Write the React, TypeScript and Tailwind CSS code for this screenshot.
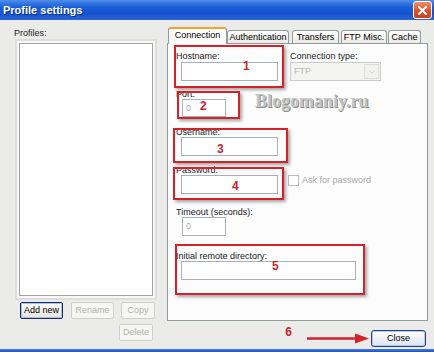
import { ChevronDown } from 'lucide-react';

function RedFrame({ className }: { className: string }) {
  return (
    <div
      className={`absolute pointer-events-none border-2 border-[#d3222a] shadow-[2px_2px_3px_rgba(0,0,0,0.35)] ${className}`}
    />
  );
}

function Num({ children, className }: { children: string; className: string }) {
  return (
    <span className={`absolute text-[12px] font-bold leading-none text-[#c8262c] ${className}`}>{children}</span>
  );
}

function Label({ children, className = '' }: { children: string; className?: string }) {
  return <div className={`h-[9px] leading-[9px] text-[#1b1b1b] whitespace-nowrap ${className}`}>{children}</div>;
}

export default function App() {
  return (
    <div className="w-[434px] h-[352px] flex flex-col overflow-hidden bg-[#ebebe9] font-['Liberation_Sans',Arial,sans-serif] text-[9px] text-black">
      {/* Title bar */}
      <div className="h-[20px] shrink-0 flex items-center justify-between pl-[3px] pr-[2px] bg-[linear-gradient(to_bottom,#4d8de9_0%,#1d5fd8_35%,#1652cf_70%,#2a66d6_100%)]">
        <span className="text-[11px] font-bold text-white leading-[20px] [text-shadow:1px_1px_0_#0a2f86]">
          Profile settings
        </span>
        <div className="w-[19px] h-[18px] rounded-[3px] border border-white bg-[linear-gradient(to_bottom,#f0906a,#d9532c_55%,#c9421c)] flex items-center justify-center">
          <svg width="11" height="11" viewBox="0 0 11 11">
            <path d="M2 2L9 9M9 2L2 9" stroke="white" strokeWidth="2" strokeLinecap="round" />
          </svg>
        </div>
      </div>

      {/* Body */}
      <div className="flex-1 flex">
        {/* Profiles list */}
        <div className="w-[167px] shrink-0 pl-[14px] pt-[9px] flex flex-col">
          <Label>Profiles:</Label>
          <div className="ml-[5px] mt-[5px] w-[134px] h-[253px] bg-white border border-[#a3a3a3] shadow-[0_0_0_2px_#f8f8f8,0_0_0_4px_#dddddd]" />
          <div className="flex ml-[6px] mt-[6px]">
            <button className="w-[43px] h-[17px] rounded-[2px] border border-[#1c2a5c] bg-[linear-gradient(to_bottom,#ffffff,#e4e4dc)] shadow-[inset_0_0_0_1px_#a9c0ec] leading-none text-black">
              Add new
            </button>
            <button className="ml-[8px] w-[43px] h-[17px] rounded-[2px] border border-[#cfcfc8] bg-[#f6f6f3] leading-none text-[#b3b3ab]">
              Rename
            </button>
            <button className="ml-[7px] w-[34px] h-[17px] rounded-[2px] border border-[#cfcfc8] bg-[#f6f6f3] leading-none text-[#b3b3ab]">
              Copy
            </button>
          </div>
          <button className="ml-[105px] mt-[5px] w-[34px] h-[17px] rounded-[2px] border border-[#cfcfc8] bg-[#f6f6f3] leading-none text-[#b3b3ab]">
            Delete
          </button>
        </div>

        {/* Tabs + panel */}
        <div className="flex-1 pr-[6px] pt-[7px] flex flex-col">
          <div className="relative z-10 flex items-end h-[17px] -mb-[1px]">
            <div className="ml-[1px] w-[59px] h-[17px] rounded-t-[3px] border-x border-t-2 border-x-[#919b9c] border-t-[#f2a535] bg-[#fcfcfc] pt-[2px] text-center leading-[9px]">
              Connection
            </div>
            <div className="mb-[1px] w-[62px] h-[13px] rounded-t-[3px] border-x border-t border-[#919b9c] bg-[linear-gradient(to_bottom,#ffffff,#ecebe6)] flex items-center justify-center leading-[9px]">
              Authentication
            </div>
            <div className="mb-[1px] ml-[3px] w-[47px] h-[13px] rounded-t-[3px] border-x border-t border-[#919b9c] bg-[linear-gradient(to_bottom,#ffffff,#ecebe6)] flex items-center justify-center leading-[9px]">
              Transfers
            </div>
            <div className="mb-[1px] ml-[2px] w-[46px] h-[13px] rounded-t-[3px] border-x border-t border-[#919b9c] bg-[linear-gradient(to_bottom,#ffffff,#ecebe6)] flex items-center justify-center leading-[9px]">
              FTP Misc.
            </div>
            <div className="mb-[1px] ml-[1px] w-[33px] h-[13px] rounded-t-[3px] border-x border-t border-[#919b9c] bg-[linear-gradient(to_bottom,#ffffff,#ecebe6)] flex items-center justify-center leading-[9px]">
              Cache
            </div>
          </div>

          <div className="relative h-[278px] border border-[#919b9c] bg-[#fcfcfc] pl-[8px] pt-[8px] flex flex-col">
            {/* Hostname / connection type */}
            <div className="flex items-start">
              <div className="relative">
                <Label>Hostname:</Label>
                <div className="ml-[5px] mt-[1px] w-[97px] h-[19px] bg-white border border-[#a7b0bb]" />
                <RedFrame className="-left-[2px] -top-[7px] w-[110px] h-[43px]" />
                <Num className="left-[67px] top-[8px]">1</Num>
              </div>
              <div className="ml-[12px]">
                <Label>Connection type:</Label>
                <div className="mt-[1px] w-[91px] h-[19px] bg-[#f4f4f2] border border-[#c9c9c6] flex items-center justify-between pl-[3px] pr-[1px]">
                  <span className="text-[#b8b8b8] leading-none">FTP</span>
                  <span className="w-[15px] h-[15px] border border-[#dcdcdc] bg-[#f1f1ef] flex items-center justify-center">
                    <ChevronDown size={10} strokeWidth={2} className="text-[#c2c2c2]" />
                  </span>
                </div>
              </div>
            </div>

            {/* Port */}
            <div className="flex items-start mt-[9px]">
              <div className="relative">
                <Label>Port:</Label>
                <div className="ml-[6px] w-[44px] h-[18px] bg-white border border-[#a7b0bb] pl-[3px] flex items-center text-[#a8a8a8] leading-none">
                  0
                </div>
                <RedFrame className="left-[1px] top-[1px] w-[63px] h-[28px]" />
                <Num className="left-[24px] top-[10px]">2</Num>
              </div>
              <span className="ml-[29px] mt-[2px] font-['Liberation_Serif',serif] text-[18px] font-bold leading-none text-[#c4c4c4] [text-shadow:1px_1px_0_#8e8e8e,-1px_-1px_0_#ffffff]">
                Blogomaniy.ru
              </span>
            </div>

            {/* Username */}
            <div className="relative mt-[11px] self-start">
              <Label>Username:</Label>
              <div className="ml-[5px] w-[97px] h-[19px] bg-white border border-[#a7b0bb]" />
              <RedFrame className="-left-[3px] top-0 w-[115px] h-[35px]" />
              <Num className="left-[41px] top-[15px]">3</Num>
            </div>

            {/* Password */}
            <div className="relative mt-[10px] self-start">
              <Label>Password:</Label>
              <div className="flex items-start">
                <div className="ml-[5px] w-[97px] h-[19px] bg-white border border-[#a7b0bb]" />
                <div className="ml-[10px] w-[11px] h-[11px] bg-white border border-[#bdbdbd]" />
                <span className="ml-[3px] leading-[11px] text-[#a6a6a6] whitespace-nowrap">Ask for password</span>
              </div>
              <RedFrame className="-left-[3px] top-[1px] w-[111px] h-[33px]" />
              <Num className="left-[56px] top-[14px]">4</Num>
            </div>

            {/* Timeout */}
            <div className="mt-[14px] self-start">
              <Label>Timeout (seconds):</Label>
              <div className="ml-[6px] w-[44px] h-[19px] bg-white border border-[#a7b0bb] pl-[3px] flex items-center text-[#a8a8a8] leading-none">
                0
              </div>
            </div>

            {/* Initial remote directory */}
            <div className="relative mt-[16px] self-start">
              <Label>Initial remote directory:</Label>
              <div className="ml-[5px] w-[175px] h-[19px] bg-white border border-[#a7b0bb]" />
              <RedFrame className="-left-[1px] -top-[8px] w-[190px] h-[51px]" />
              <Num className="left-[96px] top-[8px]">5</Num>
            </div>
          </div>

          {/* Footer */}
          <div className="flex justify-end items-start mt-[9px]">
            <span className="-mt-[4px] mr-[15px] text-[12px] font-bold leading-none text-[#c8262c]">6</span>
            <svg width="62" height="11" viewBox="0 0 62 11" className="mt-[3px] mr-[2px]">
              <line x1="0" y1="5.5" x2="50" y2="5.5" stroke="#d3222a" strokeWidth="2.5" />
              <polygon points="48,0.5 62,5.5 48,10.5" fill="#d3222a" />
            </svg>
            <button className="mr-[2px] w-[55px] h-[17px] rounded-[3px] border border-[#27407a] bg-[linear-gradient(to_bottom,#ffffff,#dbe3f2)] shadow-[inset_0_0_0_1px_#b6c9ee] leading-none text-black">
              Close
            </button>
          </div>
        </div>
      </div>

      {/* Window bottom frame */}
      <div className="h-[3px] shrink-0 bg-[linear-gradient(to_bottom,#4a7fd9,#1a4fc0)]" />
    </div>
  );
}
